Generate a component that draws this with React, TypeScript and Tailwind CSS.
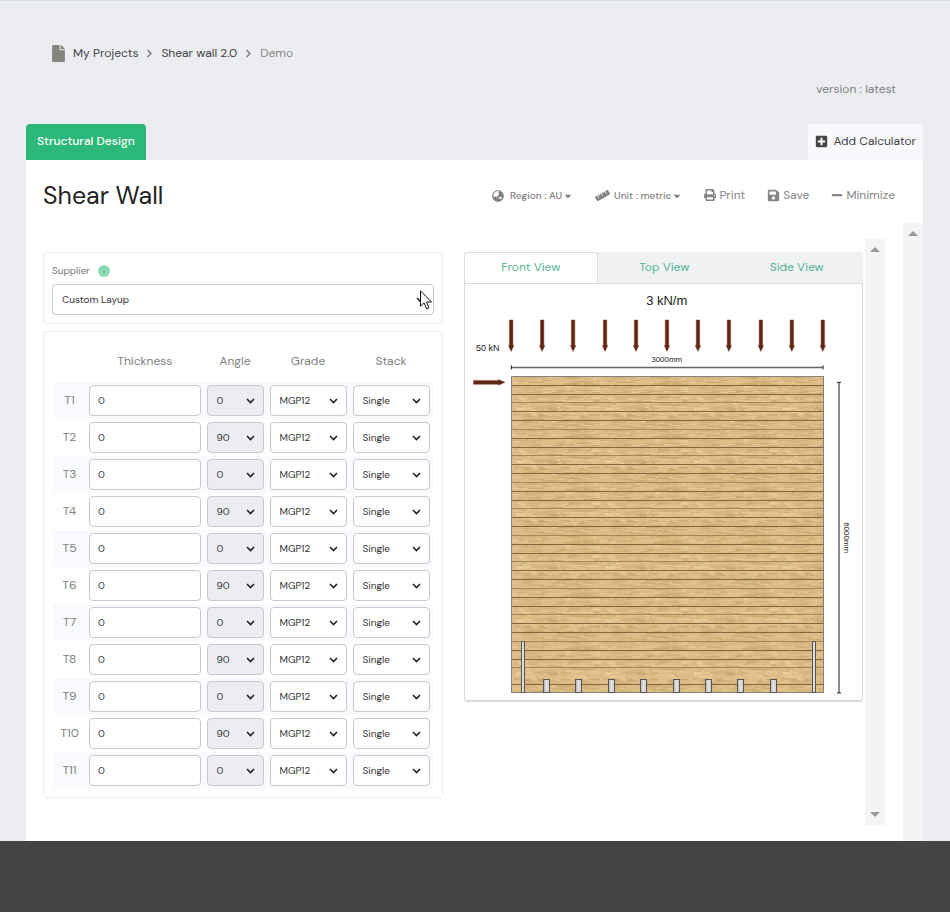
import { FC, ReactNode } from "react";
import { clsx } from "clsx";
import {
  FaCaretDown,
  FaChevronRight,
  FaFile,
  FaGlobeAsia,
  FaMinus,
  FaPlusSquare,
  FaPrint,
  FaRuler,
  FaSave,
} from "react-icons/fa";

const layers = Array.from({ length: 11 }, (_, i) => ({
  name: `T${i + 1}`,
  angle: i % 2 === 0 ? "0" : "90",
}));

const views = ["Front View", "Top View", "Side View"];

const Chevron: FC = () => (
  <svg
    className="pointer-events-none absolute top-1/2 right-2 -translate-y-1/2"
    width="10"
    height="8"
    viewBox="0 0 10 8"
    fill="none"
    stroke="#222"
    strokeWidth="1.6"
  >
    <path d="M1 2 4.500 5.500 8 2" />
  </svg>
);

interface SelectProps {
  id?: string;
  label?: string;
  options: string[];
  value: string;
  shaded?: boolean;
}

const Select: FC<SelectProps> = ({ id, label, options, value, shaded }) => (
  <div className="relative">
    <select
      id={id}
      aria-label={label}
      defaultValue={value}
      className={clsx(
        "block h-[31px] w-full appearance-none rounded border border-[#c6cace] pl-[9px] text-[10px] text-[#333]",
        shaded ? "bg-[#ecedf1]" : "bg-white",
      )}
    >
      {options.map((option) => (
        <option key={option}>{option}</option>
      ))}
    </select>
    <Chevron />
  </div>
);

const ToolButton: FC<{ icon: ReactNode; children: ReactNode }> = ({ icon, children }) => (
  <button className="flex items-center gap-[3px] pb-px text-xs text-[#858585]">
    {icon}
    {children}
  </button>
);

const ScrollBar: FC<{ down?: boolean }> = ({ down }) => (
  <div className="flex w-5 shrink-0 flex-col items-center justify-between bg-[#f4f4f7] py-2">
    <svg width="10" height="5" viewBox="0 0 10 5" fill="#999">
      <path d="M0 5 5 0l5 5z" />
    </svg>
    {down && (
      <svg width="10" height="5" viewBox="0 0 10 5" fill="#999">
        <path d="M0 0h10L5 5z" />
      </svg>
    )}
  </div>
);

// wood grain streaks for one repeating tile
const grainColors = ["#ebd09c", "#e6c992", "#d2ae7b", "#cdae76", "#dcb986", "#c6aa70"];
let seed = 7;
const rand = () => {
  seed = (seed * 16807) % 2147483647;
  return seed / 2147483647;
};
const grain = Array.from({ length: 420 }, () => ({
  x: Math.floor(rand() * 84),
  y: Math.floor(rand() * 53),
  w: 3 + Math.floor(rand() * 14),
  color: grainColors[Math.floor(rand() * grainColors.length)],
}));

const FrontView: FC = () => {
  const planks = Array.from({ length: 35 }, (_, i) => Math.round(376 + (i + 1) * 8.83));
  const arrows = Array.from({ length: 11 }, (_, i) => Math.round(511 + i * 31.2));
  const studs = Array.from({ length: 8 }, (_, i) => Math.round(543 + i * 32.4));

  return (
    <svg className="block w-full" viewBox="465 284 398 417" role="img" aria-label="Front view of the wall">
      <defs>
        <pattern id="wood" x="511" y="376" width="89" height="53" patternUnits="userSpaceOnUse">
          <rect width="89" height="53" fill="#dfbc86" />
          {grain.map((g, i) => (
            <rect key={i} x={g.x} y={g.y} width={g.w} height="1" fill={g.color} />
          ))}
        </pattern>
        <linearGradient id="steel">
          <stop offset="0" stopColor="#aaa" />
          <stop offset="0.5" stopColor="#e4e4e4" />
          <stop offset="1" stopColor="#ccc" />
        </linearGradient>
      </defs>
      <g fill="#222" fontFamily="Liberation Sans, sans-serif">
        <text x="667" y="305" fontSize="13" textAnchor="middle">3 kN/m</text>
        <text x="476" y="351" fontSize="9">50 kN</text>
        <text x="667" y="362" fontSize="8" textAnchor="middle">3000mm</text>
        <text fontSize="8" textAnchor="middle" transform="translate(844 538) rotate(90)">6000mm</text>
      </g>
      <g fill="#5c2613" stroke="#8c4a38" strokeWidth="0.5">
        {arrows.map((x) => (
          <path key={x} d={`M${x - 1.5} 320h3.5v25.500h1L${x + 0.2} 351.500 ${x - 2.5} 345.500h1z`} />
        ))}
        <path d="M473.500 380.500h25v-1l6.500 3-6.500 3v-1h-25z" />
      </g>
      <path d="M511.500 367.500H823.500M839.500 382.500V693.500" stroke="#666" strokeWidth="1.500" />
      <path d="M511.500 365.500v4M823.500 365.500v4M837.500 382.500h4M837.500 693.500h4" stroke="#222" />
      <g shapeRendering="crispEdges">
        <rect x="511" y="376" width="313" height="318" fill="url(#wood)" />
        {planks.map((y, i) => (
          <rect key={y} x="511" y={y} width="313" height="1" fill={i % 3 === 2 ? "#a5855a" : "#86663f"} />
        ))}
        <rect x="511.500" y="376.500" width="312" height="317" fill="none" stroke="#8a8075" />
        {[521, 812].map((x) => (
          <rect key={x} x={x + 0.5} y="641.500" width="3" height="52" fill="#ddd" stroke="#555" />
        ))}
        {studs.map((x) => (
          <rect key={x} x={x + 0.5} y="680.500" width="6" height="13" fill="url(#steel)" stroke="#555" />
        ))}
      </g>
    </svg>
  );
};

const LayupTable: FC = () => (
  <table className="w-full table-fixed">
    <colgroup>
      <col className="w-[33px]" />
      <col />
      <col className="w-[63px]" />
      <col className="w-[83px]" />
      <col className="w-[83px]" />
    </colgroup>
    <thead>
      <tr className="h-[43px] text-xs text-[#808080]">
        <td />
        <th className="font-normal">Thickness</th>
        <th className="font-normal">Angle</th>
        <th className="font-normal">Grade</th>
        <th className="font-normal">Stack</th>
      </tr>
    </thead>
    <tbody>
      {layers.map(({ name, angle }) => (
        <tr key={name} className="odd:bg-[#f9fafd]">
          <th className="pb-[2px] text-center text-xs font-normal text-[#808080]">{name}</th>
          <td className="p-[3px]">
            <input
              aria-label={`${name} thickness`}
              defaultValue="0"
              className="block h-[31px] w-full rounded border border-[#c6cace] bg-white px-2 text-[10px] text-[#333]"
            />
          </td>
          <td className="p-[3px]">
            <Select label={`${name} angle`} options={["0", "90"]} value={angle} shaded />
          </td>
          <td className="p-[3px]">
            <Select label={`${name} grade`} options={["MGP10", "MGP12"]} value="MGP12" />
          </td>
          <td className="p-[3px]">
            <Select label={`${name} stack`} options={["Single", "Double"]} value="Single" />
          </td>
        </tr>
      ))}
    </tbody>
  </table>
);

const App: FC = () => {
  return (
    <div className="flex min-h-screen flex-col border-t border-[#d3e2e2] bg-[#ecedf1] font-['DM_Sans',Inter,sans-serif]">
      <header className="pt-10">
        <nav className="flex h-6 items-center gap-[7px] px-[50px] text-xs text-[#444]">
          <div className="flex items-center gap-[6px]">
            <FaFile className="text-[#85857f]" size={17} />
            <a href="#projects">My Projects</a>
          </div>
          <FaChevronRight className="text-[#777]" size={9} />
          <a href="#shear-wall">Shear wall 2.0</a>
          <FaChevronRight className="text-[#777]" size={9} />
          <span className="text-[#858585]">Demo</span>
        </nav>
        <p className="mt-4 pr-[54px] text-right text-xs leading-4 text-[#808080]">version : latest</p>
        <div className="mt-[27px] flex h-9 justify-between pr-[27px] pl-[26px]">
          <button className="rounded-t bg-[#2bb878] px-[11px] pb-[2px] text-xs font-medium text-white">
            Structural Design
          </button>
          <button className="flex items-center gap-[5px] rounded-t bg-[#f8f9fc] px-[7px] pb-[2px] text-xs text-[#444]">
            <FaPlusSquare size={13} />
            Add Calculator
          </button>
        </div>
      </header>

      <main className="mr-[27px] ml-[26px] flex grow flex-col bg-white">
        <div className="flex h-[63px] items-center justify-between pt-2 pr-7 pl-[17px]">
          <h1 className="text-[25px] text-[#222]">Shear Wall</h1>
          <div className="flex items-center gap-[22px]">
            <button className="flex items-center gap-[6px] text-[10px] font-medium text-[#808080]">
              <FaGlobeAsia size={12} />
              <span className="flex items-center gap-px">
                Region : AU <FaCaretDown size={10} />
              </span>
            </button>
            <button className="flex items-center gap-1 text-[10px] font-medium text-[#808080]">
              <FaRuler size={15} />
              <span className="flex items-center gap-px">
                Unit : metric <FaCaretDown size={10} />
              </span>
            </button>
            <ToolButton icon={<FaPrint size={12} />}>Print</ToolButton>
            <ToolButton icon={<FaSave size={13} />}>Save</ToolButton>
            <ToolButton icon={<FaMinus size={12} />}>Minimize</ToolButton>
          </div>
        </div>

        <div className="flex grow">
          <div className="mt-4 mr-[18px] mb-4 flex grow pl-[17px]">
            <div className="mr-[2px] flex grow gap-[21px] pt-[13px]">
              <div className="flex flex-1 flex-col gap-[7px]">
                <section className="rounded border border-[#ececec] p-2">
                  <div className="mb-1 flex h-[19px] items-center gap-2">
                    <label htmlFor="supplier" className="text-[10px] text-[#777]">
                      Supplier
                    </label>
                    <span className="flex size-3 items-center justify-center rounded-full bg-[#8fdcb8] text-[8px] text-[#2a9c68]">
                      i
                    </span>
                  </div>
                  <div className="relative">
                    <Select id="supplier" options={["Custom Layup"]} value="Custom Layup" />
                    <svg
                      className="pointer-events-none absolute top-[6px] right-[2px]"
                      width="12"
                      height="20"
                      viewBox="0 0 12 20"
                      fill="#fff"
                      stroke="#111"
                    >
                      <path d="M.5.8v15.400l3.600-3.400 2.500 6 2.400-1-2.500-5.800h5z" />
                    </svg>
                  </div>
                </section>
                <section className="rounded border border-[#ececec] px-[9px] pt-[7px] pb-2">
                  <LayupTable />
                </section>
              </div>

              <div className="flex-1">
                <div role="tablist" className="flex h-[31px] bg-[#f0f1f3] text-xs text-[#52b595]">
                  {views.map((view, i) => (
                    <button
                      key={view}
                      role="tab"
                      aria-selected={i === 0}
                      className={clsx(
                        "flex-1 pb-[2px]",
                        i === 0 && "rounded-t border border-b-0 border-[#ddd] bg-white",
                      )}
                    >
                      {view}
                    </button>
                  ))}
                </div>
                <div className="rounded-b border border-b-2 border-[#d9dadb] bg-white">
                  <FrontView />
                </div>
              </div>
            </div>
            <ScrollBar down />
          </div>
          <ScrollBar />
        </div>
      </main>

      <footer className="h-[71px] bg-[#444]" />
    </div>
  );
};

export default App;
